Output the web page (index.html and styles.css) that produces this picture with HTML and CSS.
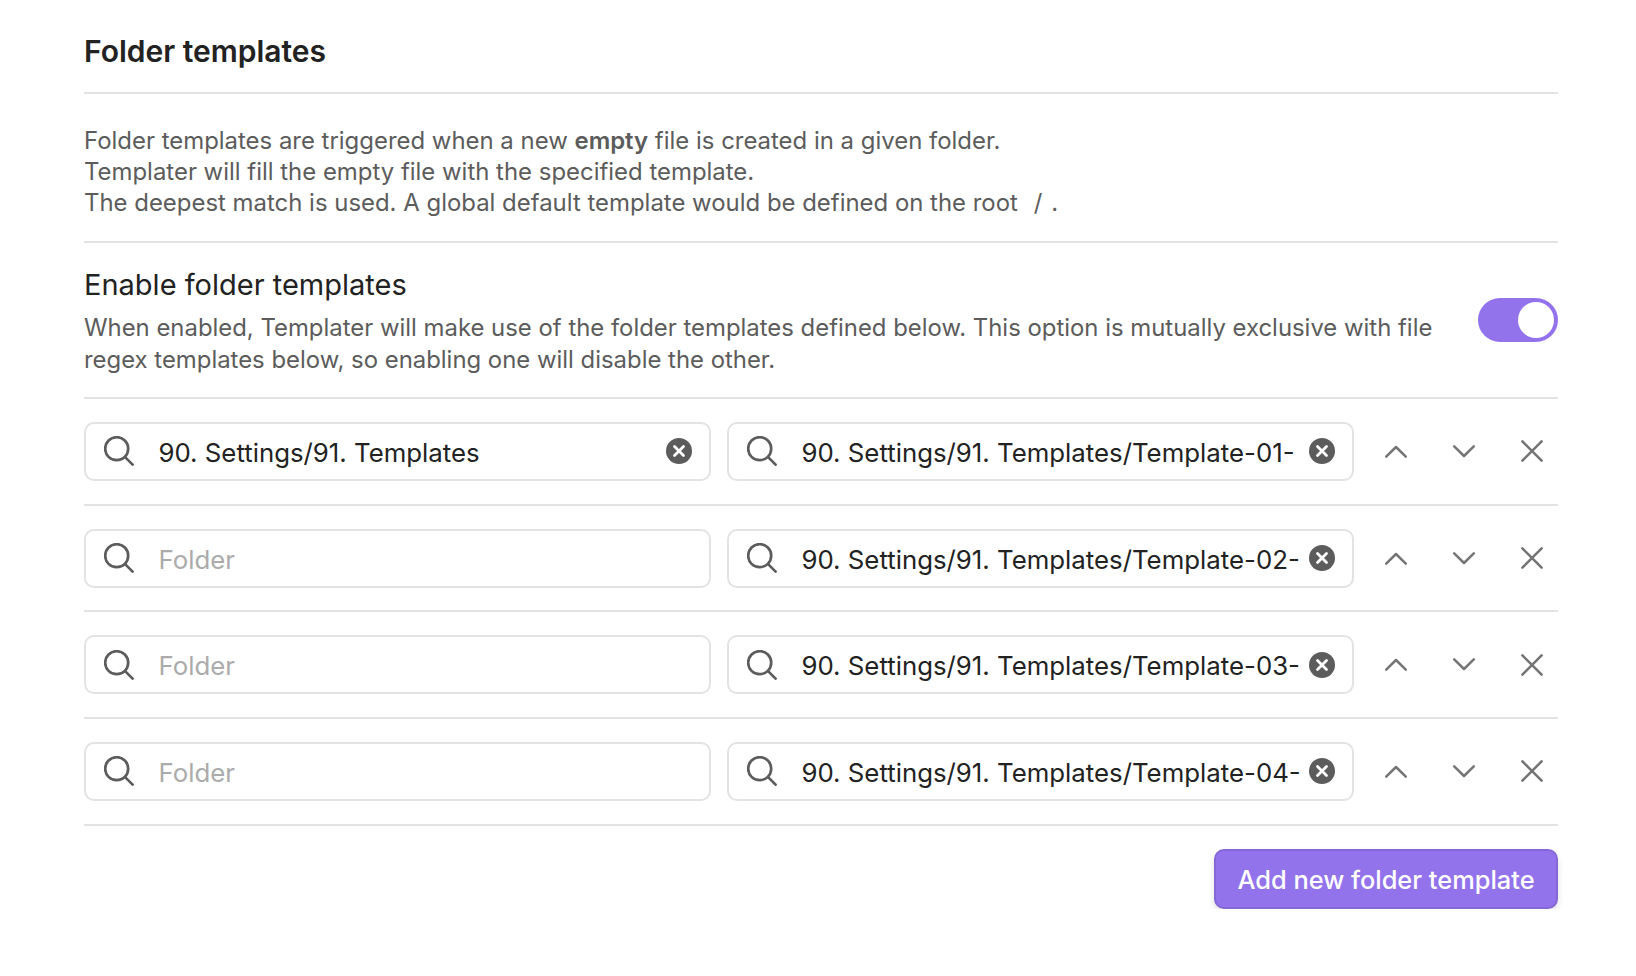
FILE: index.html
```html
<!DOCTYPE html>
<html lang="en">
<head>
  <meta charset="UTF-8">
  <meta name="viewport" content="width=device-width, initial-scale=1.0">
  <title>Folder templates</title>
  <link rel="stylesheet" href="styles.css">
</head>
<body>
  <svg class="sprites" width="0" height="0" aria-hidden="true">
    <symbol id="i-search" viewBox="0 0 30 30">
      <circle cx="12.7" cy="12.7" r="11.5" fill="none" stroke="currentColor" stroke-width="2.7"/>
      <path d="M21.6 21.6l7 7" fill="none" stroke="currentColor" stroke-width="2.7" stroke-linecap="round"/>
    </symbol>
    <symbol id="i-clear" viewBox="0 0 26 26">
      <circle cx="13" cy="13" r="13" fill="currentColor"/>
      <path d="M8.5 8.5l9 9M17.5 8.5l-9 9" fill="none" stroke="#fff" stroke-width="2.8" stroke-linecap="round"/>
    </symbol>
    <symbol id="i-up" viewBox="0 0 22 13">
      <path d="M1.2 11.6L11 2l9.8 9.6" fill="none" stroke="currentColor" stroke-width="2.5" stroke-linecap="round" stroke-linejoin="round"/>
    </symbol>
    <symbol id="i-down" viewBox="0 0 22 13">
      <path d="M1.2 1.4L11 11l9.8-9.6" fill="none" stroke="currentColor" stroke-width="2.5" stroke-linecap="round" stroke-linejoin="round"/>
    </symbol>
    <symbol id="i-close" viewBox="0 0 22 22">
      <path d="M1.4 1.4l19.2 19.2M20.6 1.4L1.4 20.6" fill="none" stroke="currentColor" stroke-width="2.6" stroke-linecap="round"/>
    </symbol>
  </svg>

  <main class="settings">
    <h2 class="heading">Folder templates</h2>

    <div class="intro">
      Folder templates are triggered when a new <strong>empty</strong> file is created in a given folder.<br>
      Templater will fill the empty file with the specified template.<br>
      The deepest match is used. A global default template would be defined on the root <code>/</code>.
    </div>

    <div class="setting">
      <div class="setting-info">
        <div class="setting-name">Enable folder templates</div>
        <div class="setting-desc">When enabled, Templater will make use of the folder templates defined below. This option is mutually exclusive with file regex templates below, so enabling one will disable the other.</div>
      </div>
      <div class="toggle"><span class="knob"></span></div>
    </div>

    <div class="row">
      <div class="search">
        <svg class="search-icon"><use href="#i-search"/></svg>
        <span class="search-text">90. Settings/91. Templates</span>
        <svg class="clear-icon"><use href="#i-clear"/></svg>
      </div>
      <div class="search">
        <svg class="search-icon"><use href="#i-search"/></svg>
        <span class="search-text">90. Settings/91. Templates/Template-01-</span>
        <svg class="clear-icon"><use href="#i-clear"/></svg>
      </div>
      <div class="actions">
        <span class="action"><svg class="chevron"><use href="#i-up"/></svg></span>
        <span class="action"><svg class="chevron"><use href="#i-down"/></svg></span>
        <span class="action"><svg class="close"><use href="#i-close"/></svg></span>
      </div>
    </div>

    <div class="row">
      <div class="search">
        <svg class="search-icon"><use href="#i-search"/></svg>
        <span class="search-text placeholder">Folder</span>
      </div>
      <div class="search">
        <svg class="search-icon"><use href="#i-search"/></svg>
        <span class="search-text">90. Settings/91. Templates/Template-02-</span>
        <svg class="clear-icon"><use href="#i-clear"/></svg>
      </div>
      <div class="actions">
        <span class="action"><svg class="chevron"><use href="#i-up"/></svg></span>
        <span class="action"><svg class="chevron"><use href="#i-down"/></svg></span>
        <span class="action"><svg class="close"><use href="#i-close"/></svg></span>
      </div>
    </div>

    <div class="row">
      <div class="search">
        <svg class="search-icon"><use href="#i-search"/></svg>
        <span class="search-text placeholder">Folder</span>
      </div>
      <div class="search">
        <svg class="search-icon"><use href="#i-search"/></svg>
        <span class="search-text">90. Settings/91. Templates/Template-03-</span>
        <svg class="clear-icon"><use href="#i-clear"/></svg>
      </div>
      <div class="actions">
        <span class="action"><svg class="chevron"><use href="#i-up"/></svg></span>
        <span class="action"><svg class="chevron"><use href="#i-down"/></svg></span>
        <span class="action"><svg class="close"><use href="#i-close"/></svg></span>
      </div>
    </div>

    <div class="row">
      <div class="search">
        <svg class="search-icon"><use href="#i-search"/></svg>
        <span class="search-text placeholder">Folder</span>
      </div>
      <div class="search">
        <svg class="search-icon"><use href="#i-search"/></svg>
        <span class="search-text">90. Settings/91. Templates/Template-04-</span>
        <svg class="clear-icon"><use href="#i-clear"/></svg>
      </div>
      <div class="actions">
        <span class="action"><svg class="chevron"><use href="#i-up"/></svg></span>
        <span class="action"><svg class="chevron"><use href="#i-down"/></svg></span>
        <span class="action"><svg class="close"><use href="#i-close"/></svg></span>
      </div>
    </div>

    <div class="footer">
      <button class="add-button" type="button">Add new folder template</button>
    </div>
  </main>
</body>
</html>
```

FILE: styles.css
```css
body {
  margin: 0;
  background-color: #fff;
  font-family: Inter, "Noto Sans", sans-serif;
  color: #222;
}

.sprites {
  position: absolute;
}

.settings {
  width: 1474px;
  margin-left: 84px;
}

.heading {
  margin: 0;
  height: 94px;
  padding-top: 32px;
  box-sizing: border-box;
  font-size: 30px;
  line-height: 38px;
  font-weight: 600;
  border-bottom: 2px solid #e3e3e3;
}

.intro {
  height: 149px;
  box-sizing: border-box;
  padding-top: 31px;
  font-size: 23.93px;
  line-height: 31.1px;
  color: #5c5c5c;
  border-bottom: 2px solid #e3e3e3;
}

.intro strong {
  font-weight: 600;
}

.intro code {
  font-family: inherit;
  padding: 0 9px;
}

.setting {
  display: flex;
  align-items: center;
  gap: 40px;
  height: 156px;
  box-sizing: border-box;
  border-bottom: 2px solid #e3e3e3;
}

.setting-info {
  flex: 1;
  padding-top: 1px;
}

.setting-name {
  font-size: 29px;
  line-height: 38px;
  margin-bottom: 8px;
}

.setting-desc {
  font-size: 23.9px;
  line-height: 32px;
  color: #5c5c5c;
}

.toggle {
  flex: none;
  display: flex;
  justify-content: flex-end;
  align-items: center;
  width: 80px;
  height: 44px;
  padding-right: 4px;
  box-sizing: border-box;
  border-radius: 22px;
  background-color: #9373ec;
}

.knob {
  width: 36px;
  height: 36px;
  border-radius: 50%;
  background-color: #fff;
}

.row {
  display: flex;
  align-items: center;
  gap: 16px;
  height: 106.7px;
  box-sizing: border-box;
  border-bottom: 2px solid #e3e3e3;
}

.search {
  flex: none;
  display: flex;
  align-items: center;
  width: 627px;
  height: 59px;
  box-sizing: border-box;
  padding: 0 17px 0 17.5px;
  border: 2px solid #e3e3e3;
  border-radius: 10px;
  font-size: 25.8px;
}

.search-icon {
  flex: none;
  width: 30px;
  height: 30px;
  margin-right: 25px;
  color: #5c5c5c;
}

.search-text {
  flex: 1;
  min-width: 0;
  padding-top: 3px;
  overflow: hidden;
  white-space: nowrap;
  line-height: 36px;
  color: #222;
}

.placeholder {
  color: #ababab;
}

.clear-icon {
  flex: none;
  width: 26px;
  height: 26px;
  margin-left: 7px;
  color: #5c5c5c;
}

.actions {
  display: flex;
  gap: 16px;
}

.action {
  display: flex;
  align-items: center;
  justify-content: center;
  width: 52px;
  height: 44px;
  color: #757575;
}

.chevron {
  width: 22px;
  height: 13px;
}

.close {
  width: 22px;
  height: 22px;
}

.footer {
  display: flex;
  justify-content: flex-end;
  padding-top: 23px;
}

.add-button {
  width: 344px;
  height: 60px;
  padding: 2px 0 0;
  border: 2px solid #8468d6;
  border-radius: 10px;
  background-color: #9373ec;
  color: #fff;
  font-family: inherit;
  font-size: 25.4px;
  font-weight: 500;
  box-shadow: 0 3px 6px rgba(0, 0, 0, 0.12);
}
```
